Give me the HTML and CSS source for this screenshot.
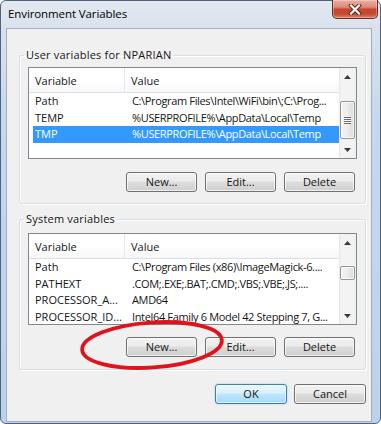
FILE: index.html
```html
<!DOCTYPE html>
<html>
<head>
<meta charset="utf-8">
<title>Environment Variables</title>
<link rel="stylesheet" href="styles.css">
</head>
<body>
<div class="window">
  <div class="titlebar">
    <span class="title">Environment Variables</span>
    <div class="close">
      <svg width="14" height="11" viewBox="0 0 14 11">
        <path d="M3 1.5 L11 9.5 M11 1.5 L3 9.5" stroke="#5a1e16" stroke-width="4" stroke-linecap="square"/>
        <path d="M3 1.5 L11 9.5 M11 1.5 L3 9.5" stroke="#ffffff" stroke-width="2.2" stroke-linecap="square"/>
      </svg>
    </div>
  </div>
  <div class="client">
    <fieldset class="group group-user">
      <legend>User variables for NPARIAN</legend>
      <div class="list">
        <div class="list-main">
          <div class="header"><span class="h1">Variable</span><span class="h2">Value</span></div>
          <div class="row"><span class="c1">Path</span><span class="c2">C:\Program Files\Intel\WiFi\bin\;C:\Prog...</span></div>
          <div class="row"><span class="c1">TEMP</span><span class="c2">%USERPROFILE%\AppData\Local\Temp</span></div>
          <div class="row sel"><span class="c1">TMP</span><span class="c2">%USERPROFILE%\AppData\Local\Temp</span></div>
        </div>
        <div class="scrollbar">
          <div class="arrow"><svg width="7" height="4" viewBox="0 0 7 4"><path d="M0 4 L3.5 0 L7 4Z" fill="#3a3a3a"/></svg></div>
          <div class="track"><div class="thumb thumb-user"><div class="grip"></div></div></div>
          <div class="arrow"><svg width="7" height="4" viewBox="0 0 7 4"><path d="M0 0 L3.5 4 L7 0Z" fill="#3a3a3a"/></svg></div>
        </div>
      </div>
      <div class="btn-row btn-row-user">
        <button class="btn">New...</button>
        <button class="btn">Edit...</button>
        <button class="btn">Delete</button>
      </div>
    </fieldset>
    <fieldset class="group group-system">
      <legend>System variables</legend>
      <div class="list">
        <div class="list-main">
          <div class="header"><span class="h1">Variable</span><span class="h2">Value</span></div>
          <div class="row"><span class="c1">Path</span><span class="c2">C:\Program Files (x86)\ImageMagick-6....</span></div>
          <div class="row"><span class="c1">PATHEXT</span><span class="c2">.COM;.EXE;.BAT;.CMD;.VBS;.VBE;.JS;....</span></div>
          <div class="row"><span class="c1">PROCESSOR_A...</span><span class="c2">AMD64</span></div>
          <div class="row"><span class="c1">PROCESSOR_ID...</span><span class="c2">Intel64 Family 6 Model 42 Stepping 7, G...</span></div>
        </div>
        <div class="scrollbar">
          <div class="arrow"><svg width="7" height="4" viewBox="0 0 7 4"><path d="M0 4 L3.5 0 L7 4Z" fill="#3a3a3a"/></svg></div>
          <div class="track"><div class="thumb thumb-system"></div></div>
          <div class="arrow"><svg width="7" height="4" viewBox="0 0 7 4"><path d="M0 0 L3.5 4 L7 0Z" fill="#3a3a3a"/></svg></div>
        </div>
      </div>
      <div class="btn-row btn-row-system">
        <button class="btn">New...</button>
        <button class="btn">Edit...</button>
        <button class="btn">Delete</button>
      </div>
    </fieldset>
    <div class="footer">
      <button class="btn btn-wide btn-default">OK</button>
      <button class="btn btn-wide">Cancel</button>
    </div>
  </div>
  <svg class="annotation" width="381" height="424" viewBox="0 0 381 424">
    <ellipse cx="152" cy="345" rx="70" ry="22.5" transform="rotate(-4 152 345)" fill="none" stroke="#e0121c" stroke-width="3.8"/>
  </svg>
</div>
</body>
</html>
```

FILE: styles.css
```css
* { box-sizing: border-box; }

html, body {
  margin: 0;
  padding: 0;
}

body {
  width: 381px;
  height: 424px;
  overflow: hidden;
  background: #ffffff;
  font-family: "Open Sans", "Noto Sans", sans-serif;
  font-size: 11px;
  color: #151515;
}

.window {
  position: relative;
  width: 381px;
  height: 424px;
  border: 1px solid #52627a;
  border-radius: 6px;
  background: linear-gradient(to bottom, #e3e9f0 0, #d8e2ee 28px, #c6d8ee 120px, #bcd1ec 100%);
  display: flex;
  flex-direction: column;
  padding: 0 8px 1px 5px;
}

.titlebar {
  height: 27px;
  display: flex;
  justify-content: space-between;
  align-items: flex-start;
}

.title {
  padding: 6px 0 0 2px;
  line-height: 14px;
  font-size: 11.5px;
  letter-spacing: -0.1px;
  color: #000;
}

.close {
  width: 46px;
  height: 19px;
  margin: -1px -6px 0 0;
  border: 1px solid #6e2a20;
  border-top: none;
  border-radius: 0 0 5px 5px;
  background: linear-gradient(to bottom, #eab0a2 0, #dc8a77 40%, #c8442e 52%, #c34a33 78%, #e08566 100%);
  box-shadow: inset 0 0 0 1px rgba(255, 255, 255, 0.3);
  display: flex;
  align-items: center;
  justify-content: center;
}

.client {
  flex: 1;
  border: 1px solid #a3afbf;
  background: #f0f0f0;
  padding: 0 5px 0 12px;
  display: flex;
  flex-direction: column;
}

.group {
  margin: 0;
  min-width: 0;
  border: 1px solid #d5dfe5;
  border-radius: 3px;
  box-shadow: 1px 1px 0 #ffffff, inset 1px 1px 0 #ffffff;
  padding: 5px 8px 11px 8px;
}

.group-user {
  margin-top: 19px;
}

.group-system {
  margin-top: 8px;
  padding-top: 7px;
  padding-bottom: 12px;
}

.group legend {
  padding: 0 2px;
  margin-left: -4px;
  line-height: 14px;
  letter-spacing: 0.2px;
}

.list {
  height: 92px;
  border: 1px solid #828790;
  background: #ffffff;
  display: flex;
}

.list-main {
  flex: 1;
  min-width: 0;
  overflow: hidden;
}

.header {
  display: flex;
  height: 25px;
  border-bottom: 1px solid #dcdfe3;
  background: linear-gradient(to bottom, #ffffff 0, #ffffff 55%, #f6f7f9 100%);
  line-height: 25px;
}

.h1 {
  width: 96px;
  padding-left: 6px;
  border-right: 1px solid #e3e8ee;
}

.h2 {
  padding-left: 6px;
}

.row {
  display: flex;
  margin-left: 4px;
  height: 16.5px;
  line-height: 16.5px;
  white-space: nowrap;
}

.row.sel {
  background: #3399ff;
  color: #ffffff;
}

.c1 {
  width: 97px;
  flex: none;
  padding-left: 2px;
  overflow: hidden;
}

.c2 {
  padding-left: 2px;
  overflow: hidden;
  letter-spacing: -0.35px;
}

.scrollbar {
  width: 17px;
  flex: none;
  display: flex;
  flex-direction: column;
  background: linear-gradient(to right, #e6e6e6 0, #f3f3f3 2px, #f3f3f3 15px, #ebebeb 100%);
}

.arrow {
  height: 17px;
  flex: none;
  display: flex;
  align-items: center;
  justify-content: center;
}

.arrow svg {
  display: block;
}

.track {
  flex: 1;
}

.thumb {
  margin: 0 1px;
  border: 1px solid #979797;
  border-radius: 2px;
  background: linear-gradient(to right, #f4f4f4 0, #ececec 50%, #dadada 100%);
  box-shadow: inset 0 0 0 1px rgba(255, 255, 255, 0.8);
  display: flex;
  align-items: center;
  justify-content: center;
}

.thumb-user {
  margin-top: 16px;
  height: 38px;
}

.thumb-system {
  margin-top: 15px;
  height: 14px;
}

.grip {
  width: 7px;
  height: 7px;
  background: repeating-linear-gradient(to bottom, #6f6f6f 0, #6f6f6f 1px, #f7f7f7 1px, #f7f7f7 2px);
}

.btn-row {
  display: flex;
  justify-content: flex-end;
  gap: 8px;
  margin-right: 2px;
}

.btn-row-user {
  margin-top: 13px;
}

.btn-row-system {
  margin-top: 12px;
}

.btn {
  width: 71px;
  height: 20px;
  padding: 0;
  border: 1px solid #707070;
  border-radius: 3px;
  background: linear-gradient(to bottom, #f2f2f2 0, #ebebeb 45%, #dddddd 50%, #cfcfcf 100%);
  box-shadow: inset 0 0 0 1px rgba(255, 255, 255, 0.7);
  font-family: inherit;
  font-size: 11px;
  line-height: 18px;
  color: #151515;
}

.footer {
  margin-top: 14px;
  display: flex;
  justify-content: flex-end;
  gap: 7px;
}

.btn-wide {
  width: 72px;
}

.btn-default {
  border-color: #3c7fb1;
  background: linear-gradient(to bottom, #eaf6fd 0, #d9f0fc 45%, #bee6fd 50%, #a7d9f5 100%);
  box-shadow: inset 0 0 0 1px rgba(255, 255, 255, 0.6), 0 0 2px #8ecbf0;
}

.annotation {
  position: absolute;
  left: -1px;
  top: -1px;
  pointer-events: none;
}
```
